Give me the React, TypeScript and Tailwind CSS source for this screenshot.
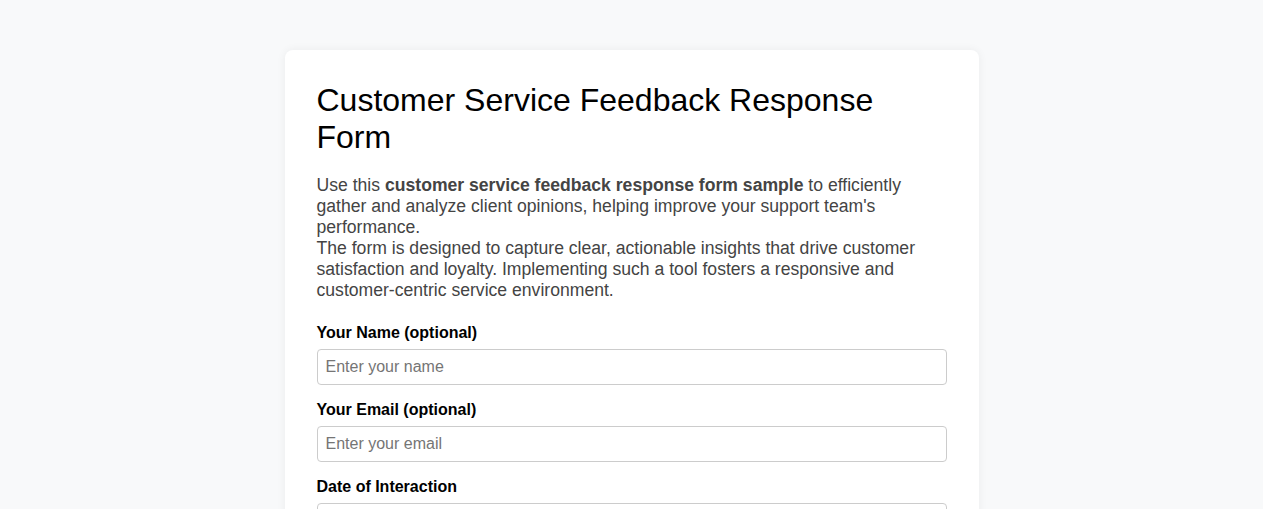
import React from "react";

export default function App() {
  const font = { fontFamily: '"Liberation Sans", Arial, sans-serif' };
  return (
    <div className="min-h-screen bg-[#f8f9fa] pt-[50px] pb-10" style={font}>
      <div className="mx-auto w-[694px] rounded-lg bg-white p-8 shadow-[0_0_10px_rgba(0,0,0,0.06)]">
        <h1 className="mb-[19px] text-[32px] font-normal leading-[1.15] text-black">
          Customer Service Feedback Response Form
        </h1>
        <p className="mb-[23px] text-[17.6px] leading-[21px] text-[#444]">
          Use this <strong className="font-bold">customer service feedback response form sample</strong> to efficiently gather and analyze client opinions, helping improve your support team's performance.
          <br />
          The form is designed to capture clear, actionable insights that drive customer satisfaction and loyalty. Implementing such a tool fosters a responsive and customer-centric service environment.
        </p>
        <form>
          <div className="mb-[15.4px]">
            <label className="mb-[7px] block text-[16px] font-bold leading-[1.15] text-black">Your Name (optional)</label>
            <input
              type="text"
              placeholder="Enter your name"
              className="block w-full rounded border border-[#ccc] px-2 py-2 text-[16px] leading-[1.15] text-black placeholder:text-[#757575]"
            />
          </div>
          <div className="mb-[15.4px]">
            <label className="mb-[6.6px] block text-[16px] font-bold leading-[1.15] text-black">Your Email (optional)</label>
            <input
              type="email"
              placeholder="Enter your email"
              className="block w-full rounded border border-[#ccc] px-2 py-2 text-[16px] leading-[1.15] text-black placeholder:text-[#757575]"
            />
          </div>
          <div className="mb-4">
            <label className="mb-[6.6px] block text-[16px] font-bold leading-[1.15] text-black">Date of Interaction</label>
            <input
              type="date"
              className="block w-full rounded border border-[#ccc] px-2 py-2 text-[16px] leading-[1.15] text-black"
            />
          </div>
        </form>
      </div>
    </div>
  );
}
